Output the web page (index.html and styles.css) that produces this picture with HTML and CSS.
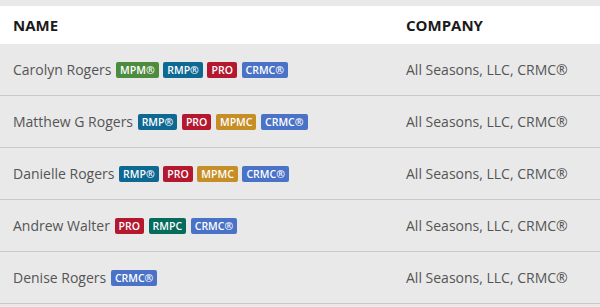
FILE: index.html
```html
<!DOCTYPE html>
<html>
<head>
<meta charset="utf-8">
<link rel="stylesheet" href="styles.css">
</head>
<body>
<table class="people">
  <thead>
    <tr><th class="col-name">NAME</th><th class="col-company">COMPANY</th></tr>
  </thead>
  <tbody>
    <tr>
      <td class="col-name">Carolyn Rogers <span class="badge mpm">MPM®</span> <span class="badge rmp">RMP®</span> <span class="badge pro">PRO</span> <span class="badge crmc">CRMC®</span></td>
      <td class="col-company">All Seasons, LLC, CRMC®</td>
    </tr>
    <tr>
      <td class="col-name">Matthew G Rogers <span class="badge rmp">RMP®</span> <span class="badge pro">PRO</span> <span class="badge mpmc">MPMC</span> <span class="badge crmc">CRMC®</span></td>
      <td class="col-company">All Seasons, LLC, CRMC®</td>
    </tr>
    <tr>
      <td class="col-name">Danielle Rogers <span class="badge rmp">RMP®</span> <span class="badge pro">PRO</span> <span class="badge mpmc">MPMC</span> <span class="badge crmc">CRMC®</span></td>
      <td class="col-company">All Seasons, LLC, CRMC®</td>
    </tr>
    <tr>
      <td class="col-name">Andrew Walter <span class="badge pro">PRO</span> <span class="badge rmpc">RMPC</span> <span class="badge crmc">CRMC®</span></td>
      <td class="col-company">All Seasons, LLC, CRMC®</td>
    </tr>
    <tr>
      <td class="col-name">Denise Rogers <span class="badge crmc">CRMC®</span></td>
      <td class="col-company">All Seasons, LLC, CRMC®</td>
    </tr>
  </tbody>
</table>
</body>
</html>
```
FILE: styles.css
```css
html, body {
  margin: 0;
  padding: 0;
  background: #e9e9e9;
}
body {
  padding-top: 6px;
  font-family: "Open Sans", "Liberation Sans", sans-serif;
  color: #555;
}
.people {
  width: 600px;
  border-collapse: collapse;
}
.people th {
  background: #fff;
  height: 38px;
  padding: 0;
  text-align: left;
  font-size: 15px;
  font-weight: 700;
  color: #1a1a1a;
  vertical-align: middle;
}
.people td {
  height: 51px;
  padding: 0;
  border-bottom: 1px solid #c9c9c9;
  font-size: 14px;
  vertical-align: middle;
  color: #555;
}
.col-name {
  padding-left: 13px !important;
  width: 393px;
}
.badge {
  display: inline-block;
  height: 16px;
  line-height: 16px;
  padding: 0 4px;
  margin-left: 1px;
  border-radius: 2px;
  font-size: 10.5px;
  font-weight: 600;
  color: #fff;
  vertical-align: 1px;
}
.mpm { background: #4d8b3f; }
.rmp { background: #0d6893; }
.pro { background: #b4182f; }
.crmc { background: #4a72c6; }
.mpmc { background: #c68e27; }
.rmpc { background: #056b5c; }
```
